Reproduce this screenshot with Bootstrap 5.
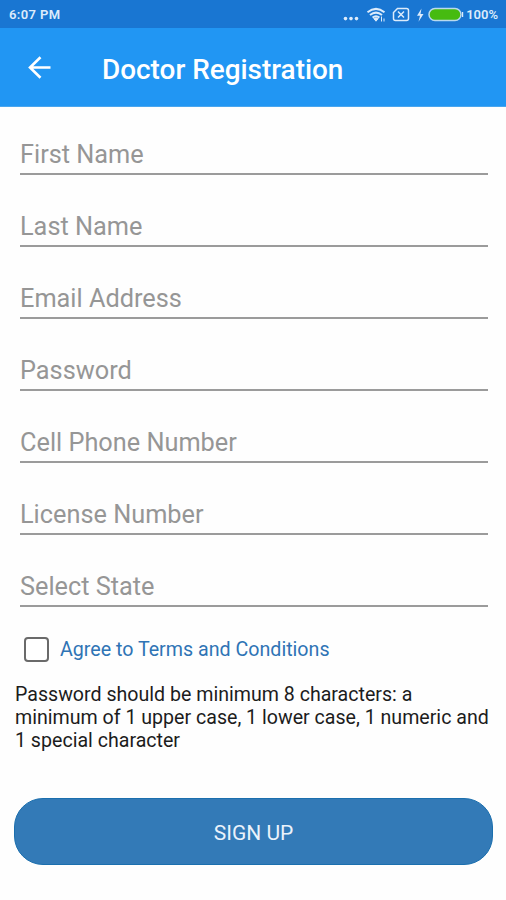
<!DOCTYPE html>
<html lang="en">
<head>
<meta charset="utf-8">
<meta name="viewport" content="width=device-width, initial-scale=1">
<title>Doctor Registration</title>
<link href="https://cdn.jsdelivr.net/npm/bootstrap@5.3.0/dist/css/bootstrap.min.css" rel="stylesheet">
<style>
  body { font-family: Roboto, "Liberation Sans", sans-serif; background: #fefefe; height: 900px; overflow: hidden; }
  .status-bar { height: 28px; background: #1976d2; color: #dcebfb; font-size: 13px; font-weight: 600; padding: 2px 8px 0 9px; }
  .status-bar svg { display: block; margin-right: 2px; }
  .clock { letter-spacing: .4px; }
  .app-bar { height: 79px; background: #2196f3; color: #fff; padding: 0 26px; border-bottom: 1px solid #4aa6ee; }
  .app-title { font-size: 27.9px; font-weight: 500; line-height: 32px; margin: 5px 0 0 50px; }
  .reg-form { padding: 0 13px 0 14px; }
  .fields { padding: 0 5px 0 6px; }
  .field { height: 72.1px; padding-bottom: 2.7px; border-bottom: 2px solid #9b9b9b; color: #969696; font-size: 25.3px; line-height: 30px; }
  .field:first-child { height: 67.5px; }
  .check-box { width: 25px; height: 25px; border: 2px solid #6a6a6a; border-radius: 3px; background: #fff; margin: 0; }
  .terms { color: #2f74b5; font-size: 19.65px; line-height: 24px; padding-top: 2px; }
  .agree { padding: 29px 0 0 10px; gap: 11px; }
  .hint { color: #1c1c1c; font-size: 19.6px; line-height: 23px; margin: 21px 0 0 1px; white-space: nowrap; }
  .btn-signup { --bs-btn-color: #eaf2fb; --bs-btn-bg: #337ab7; --bs-btn-border-color: #1b6fae; --bs-btn-border-width: 1px; height: 67px; border-radius: 29px; font-size: 21px; margin-top: 46px; padding: 9px 0 5px; }
</style>
</head>
<body>
<header>
  <div class="status-bar d-flex align-items-center justify-content-between">
    <span class="clock">6:07 PM</span>
    <div class="d-flex align-items-center">
      <svg width="124" height="24" viewBox="340 2 124 24" fill="none" stroke="#dcebfb">
        <g fill="#dcebfb" stroke="none"><circle cx="345.5" cy="17.6" r="1.8"/><circle cx="351" cy="17.6" r="1.8"/><circle cx="356.500" cy="17.600" r="1.800"/></g>
        <path d="M367.500 11.300Q376 4.500 384.500 11.300M370 14Q376 9.200 382 14M372.600 16.600Q376 14 379.400 16.600" stroke-width="2"/>
        <path d="M376 20.200l-2.200-2.600q2.200-1.500 4.400 0zM381.500 15.500v5M384 17.500v3" fill="#dcebfb" stroke-width="1"/>
        <path d="M397.500 7.500h9q2 0 2 2v8q0 2-2 2h-11q-2 0-2-2v-6z" stroke-width="1.500"/>
        <path d="M398 10.500l6 6m0-6l-6 6" stroke-width="1.500"/>
        <path d="M421.500 7.500l-4.500 7.200h3l-1.500 6 5-7.700h-3z" fill="#dcebfb" stroke="none"/>
        <rect x="429" y="7.500" width="32" height="12" rx="6" fill="#46bb10" stroke="#b9d9ee" stroke-width="1.500"/>
        <path d="M462.600 11v5" stroke-width="1.200"/>
      </svg>
      <span>100%</span>
    </div>
  </div>
  <nav class="app-bar d-flex align-items-center">
    <svg width="26" height="26" viewBox="0 0 26 26" fill="none" stroke="#fff" stroke-width="2.600"><path d="M14.500 3.200L4 13.500l10.500 10.300M3.500 13.500h21"/></svg>
    <h1 class="app-title">Doctor Registration</h1>
  </nav>
</header>
<main class="reg-form">
  <div class="fields">
    <div class="field d-flex align-items-end">First Name</div>
    <div class="field d-flex align-items-end">Last Name</div>
    <div class="field d-flex align-items-end">Email Address</div>
    <div class="field d-flex align-items-end">Password</div>
    <div class="field d-flex align-items-end">Cell Phone Number</div>
    <div class="field d-flex align-items-end">License Number</div>
    <div class="field d-flex align-items-end">Select State</div>
  </div>
  <div class="agree d-flex align-items-center">
    <input class="check-box form-check-input" type="checkbox" id="agree">
    <label class="terms" for="agree">Agree to Terms and Conditions</label>
  </div>
  <p class="hint">Password should be minimum 8 characters: a<br>minimum of 1 upper case, 1 lower case, 1 numeric and<br>1 special character</p>
  <button type="button" class="btn btn-signup w-100">SIGN UP</button>
</main>
<script src="https://cdn.jsdelivr.net/npm/bootstrap@5.3.0/dist/js/bootstrap.bundle.min.js"></script>
</body>
</html>
